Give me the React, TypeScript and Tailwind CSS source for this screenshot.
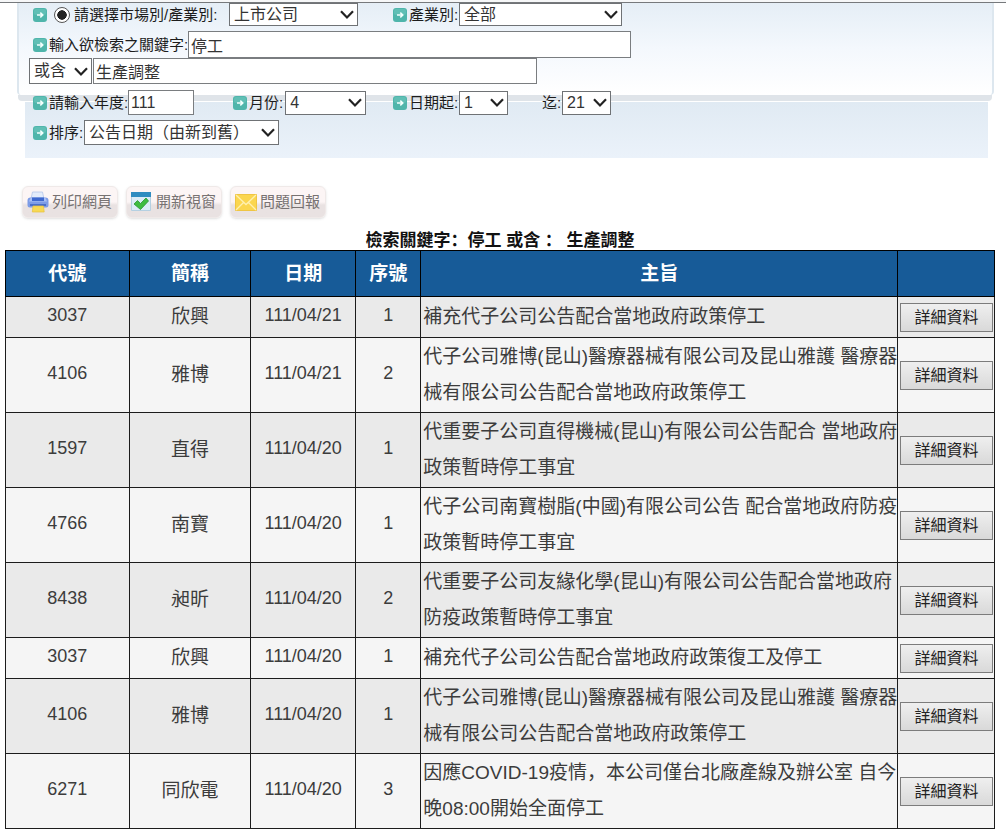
import { ReactNode } from "react";

const rows: [string, string, string, string, string][] = [
  ["3037", "欣興", "111/04/21", "1", "補充代子公司公告配合當地政府政策停工"],
  ["4106", "雅博", "111/04/21", "2", "代子公司雅博(昆山)醫療器械有限公司及昆山雅護 醫療器\n械有限公司公告配合當地政府政策停工"],
  ["1597", "直得", "111/04/20", "1", "代重要子公司直得機械(昆山)有限公司公告配合 當地政府\n政策暫時停工事宜"],
  ["4766", "南寶", "111/04/20", "1", "代子公司南寶樹脂(中國)有限公司公告 配合當地政府防疫\n政策暫時停工事宜"],
  ["8438", "昶昕", "111/04/20", "2", "代重要子公司友緣化學(昆山)有限公司公告配合當地政府\n防疫政策暫時停工事宜"],
  ["3037", "欣興", "111/04/20", "1", "補充代子公司公告配合當地政府政策復工及停工"],
  ["4106", "雅博", "111/04/20", "1", "代子公司雅博(昆山)醫療器械有限公司及昆山雅護 醫療器\n械有限公司公告配合當地政府政策停工"],
  ["6271", "同欣電", "111/04/20", "3", "因應COVID-19疫情，本公司僅台北廠產線及辦公室 自今\n晚08:00開始全面停工"],
];

function Bullet() {
  return (
    <svg viewBox="0 0 14 14" className="h-3.5 w-3.5 shrink-0" aria-hidden="true">
      <rect width="14" height="14" rx="3" fill="#4fb5ab" />
      <rect x="1" y="1" width="12" height="6" rx="2" fill="#6cc6bd" opacity="0.6" />
      <path d="M4 7h5.5M7.3 4.6 9.8 7 7.3 9.4" fill="none" stroke="#f2fffd" strokeWidth="1.5" />
    </svg>
  );
}

function Select({ id, label, options, className }: { id: string; label?: string; options: string[]; className: string }) {
  return (
    <span className={`grid shrink-0 ${className}`}>
      <select
        id={id}
        aria-label={label}
        className="col-start-1 row-start-1 w-full appearance-none rounded-none border border-[#6f7275] bg-white pl-1 text-base leading-5 text-[#333]"
      >
        {options.map((o) => (
          <option key={o}>{o}</option>
        ))}
      </select>
      <svg viewBox="0 0 14 9" className="pointer-events-none col-start-1 row-start-1 mr-1 h-[9px] w-3.5 self-center justify-self-end" aria-hidden="true">
        <path d="M1 1.2 7 7.4 13 1.2" fill="none" stroke="#222" strokeWidth="2.2" />
      </svg>
    </span>
  );
}

function TextBox({ id, label, value, className }: { id: string; label?: string; value: string; className: string }) {
  return (
    <input
      id={id}
      aria-label={label}
      type="text"
      defaultValue={value}
      className={`shrink-0 rounded-none border border-[#7a7d80] bg-white px-0.5 text-base leading-5 text-[#333] ${className}`}
    />
  );
}

function ToolButton({ icon, children }: { icon: ReactNode; children: string }) {
  return (
    <button
      type="button"
      className="flex h-8 w-24 items-center justify-between rounded-md border border-[#efe9e8] bg-linear-to-b from-[#fcf5f5] from-50% to-[#e9e2e2] to-60% pr-[5px] pl-1 text-[15px] leading-5 text-[#777272] shadow-sm"
    >
      {icon}
      <span>{children}</span>
    </button>
  );
}

function PrinterIcon() {
  return (
    <svg viewBox="0 0 22 22" className="h-[22px] w-[22px]" aria-hidden="true">
      <path d="M5.5 1h10l1.5 7h-13z" fill="#e3ecfb" stroke="#b4c6ea" strokeWidth="0.8" />
      <path d="M3.5 6.5h15a3 3 0 0 1 3 3V14a2.5 2.5 0 0 1-2.5 2.5H3A2.5 2.5 0 0 1 .5 14V9.5a3 3 0 0 1 3-3z" fill="#7d9ce6" />
      <path d="M3.5 7h15l1.5 3.5H2z" fill="#a9c0f4" />
      <path d="M5 6.5h12v3.5H5z" fill="#3f69cf" />
      <path d="M3 13h16v2H3z" fill="#4a6fc9" />
      <path d="M6 15h10.500l.7 6H5.300z" fill="#f7d955" stroke="#e6c23d" strokeWidth="0.7" />
    </svg>
  );
}

function WindowIcon() {
  return (
    <svg viewBox="0 0 20 20" className="h-5 w-5" aria-hidden="true">
      <path d="M.5.5h19v18H.5z" fill="#dcecf6" stroke="#b5d0e2" />
      <path d="M0 0h20v5H0z" fill="#2f8cc0" />
      <path d="m3 12 3.500-3.500 3 3L15 6l2.500 3-8 8.500z" fill="#3fbc40" stroke="#279632" strokeWidth="0.8" />
    </svg>
  );
}

function MailIcon() {
  return (
    <svg viewBox="0 0 22 17" className="h-[17px] w-[22px]" aria-hidden="true">
      <path d="M.5.5h21v16H.5z" fill="#fbd64f" stroke="#efc544" />
      <path d="m1 16 7.500-7.500M21 16l-7.500-7.500M1 1l10 9.500L21 1" fill="none" stroke="#fff0b0" strokeWidth="1.300" />
    </svg>
  );
}

const numberCell = "border border-[#1c1c1c] p-0 pb-1 text-center";

export default function App() {
  return (
    <main className="min-h-screen bg-white font-['Liberation_Sans','Noto_Sans_CJK_SC',sans-serif] text-[15px] leading-5 text-[#1c1c1c]">
      <div className="h-[3px] border-b border-[#76797c] bg-[#f6f7f8]" />

      <form className="grid whitespace-nowrap">
        <div className="col-start-1 row-start-1 flex flex-col" aria-hidden="true">
          <div className="mr-3 ml-[17px] h-[92px] rounded-b-sm border-x-2 border-[#dde7ef] bg-linear-to-b from-[#e5eef6] via-[#f4f8fd] to-white" />
          <div className="mr-3.5 ml-[18px] h-1.5 rounded-b-sm bg-[#dfe4e9]" />
          <div className="mt-px mr-[18px] ml-[25px] flex-1 bg-linear-to-b from-[#e0eaf3] to-[#ebf2fa]" />
        </div>

        <div className="col-start-1 row-start-1 flex flex-col pb-[13px] pl-[29px]">
          <div className="flex h-[23px] items-center">
            <div className="flex w-[364px] items-center pl-1">
              <Bullet />
              <label className="flex items-center pl-[7px]">
                <input
                  type="radio"
                  name="scope"
                  defaultChecked
                  className="mr-1 h-4 w-4 appearance-none rounded-full border border-[#555] bg-white bg-radial from-[#222] from-45% to-white to-50%"
                />
                <span className="w-[155px]">請選擇市場別/產業別:</span>
              </label>
              <Select id="market" label="市場別" options={["上市公司", "上櫃公司"]} className="h-[23px] w-[129px]" />
            </div>
            <Bullet />
            <label htmlFor="industry" className="w-[52px] pl-0.5">產業別:</label>
            <Select id="industry" options={["全部"]} className="h-[23px] w-[163px]" />
          </div>

          <div className="mt-[5px] flex items-center pl-1">
            <Bullet />
            <label htmlFor="keyword" className="w-[141px] pl-0.5">輸入欲檢索之關鍵字:</label>
            <TextBox id="keyword" value="停工" className="h-[27px] w-[443px]" />
          </div>

          <div className="flex items-center gap-px">
            <Select id="operator" label="條件" options={["或含", "且含"]} className="h-[26px] w-[63px]" />
            <TextBox id="keyword2" label="第二關鍵字" value="生產調整" className="h-[26px] w-[444px]" />
          </div>

          <div className="mt-1.5 flex items-center pl-1">
            <Bullet />
            <label htmlFor="year" className="w-[81px] pl-0.5">請輸入年度:</label>
            <TextBox id="year" value="111" className="h-[25px] w-[66px]" />
            <div className="flex w-[199px] items-center pl-[39px]">
              <Bullet />
              <label htmlFor="month" className="pr-0.5 pl-0.5">月份:</label>
              <Select id="month" options={["4", "5"]} className="h-6 w-[81px]" />
            </div>
            <Bullet />
            <label htmlFor="from" className="w-[52px] pl-0.5">日期起:</label>
            <Select id="from" options={["1", "2"]} className="h-6 w-[49px]" />
            <label htmlFor="to" className="w-[54px] pl-[34px]">迄:</label>
            <Select id="to" options={["21", "22"]} className="h-6 w-[49px]" />
          </div>

          <div className="mt-[5px] flex items-center pl-1">
            <Bullet />
            <label htmlFor="sort" className="w-[37px] pl-0.5">排序:</label>
            <Select id="sort" options={["公告日期（由新到舊）", "公告日期（由舊到新）"]} className="h-[25px] w-[195px]" />
          </div>
        </div>
      </form>

      <div className="mt-7 flex gap-2 pl-[22px]">
        <ToolButton icon={<PrinterIcon />}>列印網頁</ToolButton>
        <ToolButton icon={<WindowIcon />}>開新視窗</ToolButton>
        <ToolButton icon={<MailIcon />}>問題回報</ToolButton>
      </div>

      <div className="mt-3.5 mr-[11px] ml-[5px]">
        <h1 className="text-center text-[17px] leading-[18px] font-bold text-[#111]">檢索關鍵字：停工 或含 ： 生產調整</h1>
        <table className="w-full table-fixed border-collapse border border-black">
          <colgroup>
            <col className="w-[12.5%]" />
            <col className="w-[12.3%]" />
            <col className="w-[10.6%]" />
            <col className="w-[6.6%]" />
            <col className="w-[48.2%]" />
            <col className="w-[9.8%]" />
          </colgroup>
          <thead>
            <tr className="h-[46px] bg-[#175b98] text-[19px] text-white">
              {["代號", "簡稱", "日期", "序號", "主旨", ""].map((h) => (
                <th key={h} className="border border-black p-0 font-bold">{h}</th>
              ))}
            </tr>
          </thead>
          <tbody className="text-lg leading-9 text-[#3c3c3c]">
            {rows.map(([code, name, date, no, subject], i) => (
              <tr key={i} className="h-[41px] odd:bg-[#eaeaea] even:bg-[#f5f5f5]">
                <td className={numberCell}>{code}</td>
                <td className="border border-[#1c1c1c] p-0 text-center text-[19px]">{name}</td>
                <td className={numberCell}>{date}</td>
                <td className={numberCell}>{no}</td>
                <td className="border border-[#1c1c1c] py-px pr-0 pl-0.5 text-[19px] whitespace-pre">{subject}</td>
                <td className="border border-[#1c1c1c] p-0 pr-px pl-0.5">
                  <button
                    type="button"
                    className="mt-px block h-[29px] w-full border border-[#7c7c7c] bg-linear-to-b from-[#efefef] to-[#d9d9d9] text-base leading-6 text-[#222]"
                  >
                    詳細資料
                  </button>
                </td>
              </tr>
            ))}
          </tbody>
        </table>
      </div>
    </main>
  );
}
